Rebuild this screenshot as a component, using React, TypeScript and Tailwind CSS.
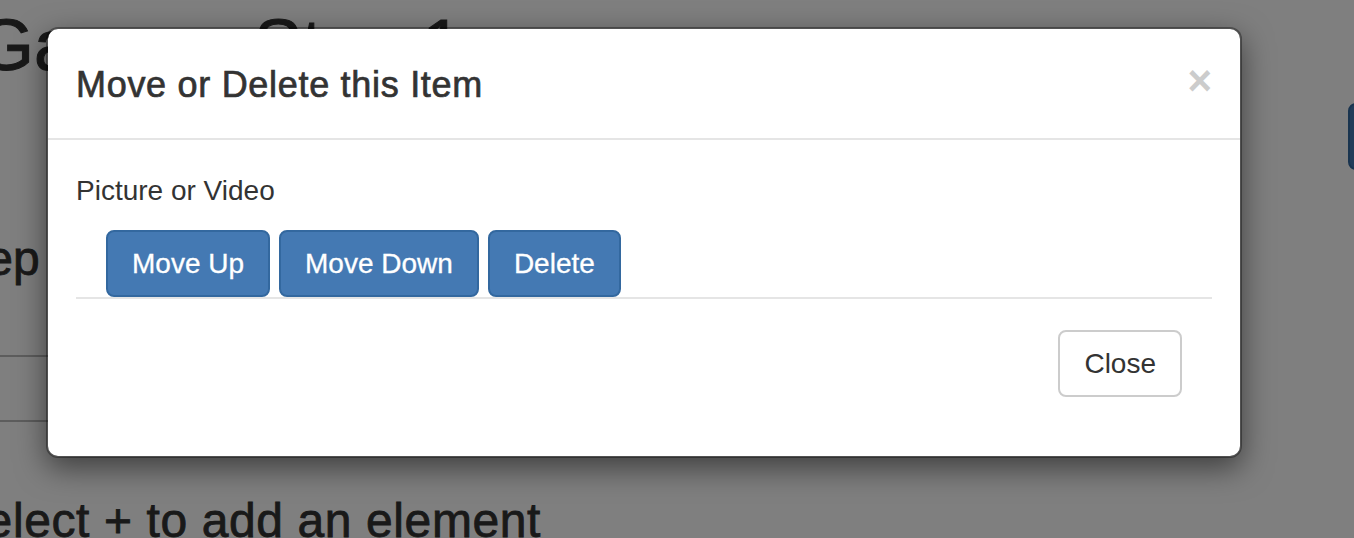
const App = () => {
  return (
    <div className="relative h-[538px] w-[1354px] overflow-hidden bg-white font-['Liberation_Sans',Arial,sans-serif] text-[#333]">
      {/* Page underneath the modal */}
      <div className="flex flex-col">
        <h1 className="-ml-[22px] mt-[5px] whitespace-nowrap text-[72px] leading-[80px] [-webkit-text-stroke:1px_#333]">
          Gamma Step 1
        </h1>
        <div className="mt-[18px] flex justify-end">
          <button className="-mr-[114px] h-[67px] w-[120px] rounded-[8px] border-2 border-[#33689f] bg-[#4479b3]" />
        </div>
        <h3 className="-ml-[59px] mt-[62px] whitespace-nowrap text-[48px] leading-[53px] [-webkit-text-stroke:0.8px_#333]">
          Step
        </h3>
        <div className="mt-[70px] h-[2px] w-[900px] bg-[#bbb]" />
        <div className="mt-[63px] h-[2px] w-[900px] bg-[#bbb]" />
        <h3 className="-ml-[47px] mt-[72px] whitespace-nowrap text-[48px] leading-[53px] tracking-[0.6px] [-webkit-text-stroke:0.8px_#333]">
          Select + to add an element
        </h3>
      </div>

      {/* Backdrop + modal */}
      <div className="absolute inset-0 bg-black/50">
        <div className="ml-[46px] mt-[27px] w-[1196px] rounded-[12px] border-2 border-black/35 bg-white bg-clip-padding shadow-[0_10px_30px_rgba(0,0,0,0.5)]">
          {/* Header */}
          <div className="flex items-start border-b-2 border-[#e5e5e5] px-[28px] pb-[28px] pt-[31px]">
            <h4 className="flex-1 text-[36px] leading-[50px] tracking-[0.7px] text-[#333] [-webkit-text-stroke:0.7px_#333]">
              Move or Delete this Item
            </h4>
            <span className="mt-0 text-[42px] font-bold leading-[42px] text-[#ccc]">×</span>
          </div>

          {/* Body */}
          <div className="px-[28px] pt-[31px]">
            <p className="text-[28px] leading-[40px] text-[#333]">Picture or Video</p>
            <div className="mt-[19px] flex gap-[9px] border-b-2 border-[#e5e5e5] pl-[30px]">
              <button className="flex h-[67px] items-center rounded-[8px] border-2 border-[#33689f] bg-[#4479b3] px-[24px] text-[28px] text-white [-webkit-text-stroke:0.3px_#fff]">
                Move Up
              </button>
              <button className="flex h-[67px] items-center rounded-[8px] border-2 border-[#33689f] bg-[#4479b3] px-[24px] text-[28px] text-white [-webkit-text-stroke:0.3px_#fff]">
                Move Down
              </button>
              <button className="flex h-[67px] items-center rounded-[8px] border-2 border-[#33689f] bg-[#4479b3] px-[24px] text-[28px] text-white [-webkit-text-stroke:0.3px_#fff]">
                Delete
              </button>
            </div>
          </div>

          {/* Footer */}
          <div className="flex justify-end pb-[59px] pr-[58px] pt-[31px]">
            <button className="flex h-[67px] items-center rounded-[8px] border-2 border-[#ccc] bg-white px-[24px] text-[28px] text-[#333]">
              Close
            </button>
          </div>
        </div>
      </div>
    </div>
  );
};

export default App;
